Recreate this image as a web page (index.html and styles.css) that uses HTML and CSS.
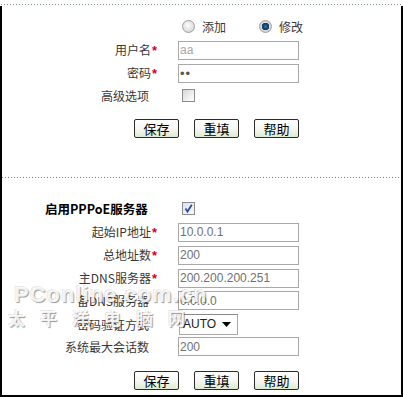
FILE: index.html
```html
<!DOCTYPE html>
<html lang="zh-CN">

<head>
    <meta charset="UTF-8">
    <meta name="viewport" content="width=device-width, initial-scale=1.0">
    <title>PPPoE服务器</title>
    <link rel="stylesheet" href="styles.css">
</head>

<body>
    <div class="page">
        <div class="dots dots-top"></div>
        <div class="frame">
            <!-- 用户设置 -->
            <div class="section section-user">
                <div class="row">
                    <span class="label"></span>
                    <div class="field radios">
                        <span class="radio"></span><span class="radio-text">添加</span>
                        <span class="radio checked"></span><span class="radio-text">修改</span>
                    </div>
                </div>
                <div class="row">
                    <span class="label">用户名<b class="req">*</b></span>
                    <div class="field"><input class="text dim" type="text" value="aa"></div>
                </div>
                <div class="row">
                    <span class="label">密码<b class="req">*</b></span>
                    <div class="field"><input class="text pass" type="password" value="aa"></div>
                </div>
                <div class="row">
                    <span class="label label-up">高级选项</span>
                    <div class="field"><span class="check"></span></div>
                </div>
                <div class="buttons">
                    <button class="btn">保存</button>
                    <button class="btn">重填</button>
                    <button class="btn">帮助</button>
                </div>
            </div>

            <div class="dots dots-mid"></div>

            <!-- PPPoE服务器 -->
            <div class="section section-pppoe">
                <div class="row row-title">
                    <span class="label title">启用PPPoE服务器</span>
                    <div class="field">
                        <span class="check checked">
                            <svg width="11" height="11" viewBox="0 0 11 11">
                                <path d="M2.5 5.5 L4.5 8.5 L8.8 1.8" fill="none" stroke="#2c4fa3" stroke-width="1.8" />
                            </svg>
                        </span>
                    </div>
                </div>
                <div class="row">
                    <span class="label">起始IP地址<b class="req">*</b></span>
                    <div class="field"><input class="text" type="text" value="10.0.0.1"></div>
                </div>
                <div class="row">
                    <span class="label">总地址数<b class="req">*</b></span>
                    <div class="field"><input class="text" type="text" value="200"></div>
                </div>
                <div class="row">
                    <span class="label">主DNS服务器<b class="req">*</b></span>
                    <div class="field"><input class="text" type="text" value="200.200.200.251"></div>
                </div>
                <div class="row">
                    <span class="label label-pad">备DNS服务器</span>
                    <div class="field"><input class="text" type="text" value="0.0.0.0"></div>
                </div>
                <div class="row">
                    <span class="label label-pad">密码验证方式</span>
                    <div class="field">
                        <div class="select">
                            <span>AUTO</span>
                            <svg width="9" height="5" viewBox="0 0 9 5"><path d="M0 0 H9 L4.5 5 Z" fill="#000" /></svg>
                        </div>
                    </div>
                </div>
                <div class="row">
                    <span class="label label-pad">系统最大会话数</span>
                    <div class="field"><input class="text" type="text" value="200"></div>
                </div>
                <div class="buttons">
                    <button class="btn">保存</button>
                    <button class="btn">重填</button>
                    <button class="btn">帮助</button>
                </div>
            </div>
        </div>

        <!-- 水印 -->
        <div class="watermark">
            <div class="wm-en">PConline.com.cn</div>
            <div class="wm-cn">太平洋电脑网</div>
        </div>
    </div>
</body>

</html>
```

FILE: styles.css
```css
* {
    margin: 0;
    padding: 0;
    box-sizing: border-box;
}

body {
    background: #fff;
    font-family: "Noto Sans CJK SC", "Liberation Sans", sans-serif;
    font-size: 12px;
    color: #383838;
}

.page {
    position: relative;
    width: 403px;
    height: 397px;
    overflow: hidden;
}

.dots {
    height: 1px;
    background-image: repeating-linear-gradient(to right, #7f9090 0, #7f9090 1px, transparent 1px, transparent 3px);
}

.dots-top {
    margin: 4px 2px 0 1px;
}

.dots-mid {
    background-image: repeating-linear-gradient(to right, #6f8f6f 0, #6f8f6f 1px, transparent 1px, transparent 3px);
}

.frame {
    margin-top: 1px;
    border-left: 2px solid #000;
    border-right: 2px solid #000;
    border-bottom: 2px solid #000;
}

.section-user {
    padding-top: 11px;
}

.section-pppoe {
    padding-top: 20px;
    padding-bottom: 5px;
}

.row {
    display: grid;
    grid-template-columns: 155px 1fr;
    column-gap: 21px;
    align-items: center;
    height: 19px;
    margin-bottom: 4px;
    line-height: 19px;
}

.row-title {
    height: 20px;
}

.label {
    text-align: right;
    white-space: nowrap;
}

.label-pad {
    padding-right: 8px;
}

.label-up {
    padding-right: 8px;
    line-height: 15px;
}

.title {
    text-align: left;
    padding-left: 43px;
    font-weight: bold;
    color: #000;
    font-size: 12.5px;
}

.req {
    color: #d4001a;
    font-family: "Liberation Sans", sans-serif;
    font-size: 13px;
    margin-left: 1px;
}

.field {
    display: flex;
    align-items: center;
}

.radios .radio {
    margin-left: 4px;
}

.radios .radio.checked {
    margin-left: 33px;
}

.radio {
    display: inline-block;
    width: 13px;
    height: 13px;
    border-radius: 50%;
    border: 1px solid #a0a0a0;
    background: radial-gradient(circle at 45% 40%, #fdfdfd 0, #e2e2e2 55%, #c8c8c8 100%);
}

.radio.checked {
    background: radial-gradient(circle at 50% 50%, #3d7fae 0, #1b4a74 2px, #123a5c 3.5px, #dcdcdc 4px, #c4c4c4 100%);
}

.radio-text {
    margin-left: 7px;
    color: #383838;
    font-size: 12px;
}

.text {
    width: 121px;
    height: 19px;
    border: 1px solid #a8a8a8;
    padding: 0 1px;
    font-family: "Liberation Sans", sans-serif;
    font-size: 12px;
    color: #707070;
    background: #fff;
    outline: none;
}

.text.dim {
    color: #a8a8a8;
}

.text.pass {
    font-size: 13px;
    letter-spacing: 1px;
    color: #555;
}

.check {
    display: inline-flex;
    align-items: center;
    justify-content: center;
    width: 13px;
    height: 13px;
    margin-left: 4px;
    border: 1px solid #8c8c8c;
    background: linear-gradient(135deg, #d6d6d6 0%, #f4f4f4 70%, #fff 100%);
}

.check.checked {
    background: linear-gradient(135deg, #dfe3ea 0%, #f6f7f9 100%);
}

.select {
    display: flex;
    align-items: center;
    justify-content: space-between;
    width: 59px;
    height: 21px;
    margin-left: 1px;
    padding: 0 6px 0 3px;
    border: 1px solid #a8a8a8;
    border-top-color: #888;
    font-family: "Liberation Sans", sans-serif;
    font-size: 12px;
    color: #222;
    background: #fff;
}

.buttons {
    display: flex;
    gap: 15px;
    padding-left: 132px;
    margin-top: 14px;
}

.section-user .buttons {
    margin-bottom: 39px;
}

.section-pppoe .buttons {
    margin-top: 15px;
}

.section-user .row:nth-child(4) {
    margin-bottom: 0;
}

.section-pppoe .row:nth-child(7) {
    margin-bottom: 0;
}

.btn {
    width: 45px;
    height: 19px;
    border: 1px solid #2b2b2b;
    border-radius: 2px;
    background: linear-gradient(to bottom, #ffffff 0%, #f6f6f2 55%, #dcebcf 100%);
    font-family: "Noto Sans CJK SC", sans-serif;
    font-size: 13px;
    line-height: 17px;
    color: #000;
}

.watermark {
    position: absolute;
    left: 14px;
    top: 283px;
    pointer-events: none;
    color: rgba(255, 255, 255, 0.9);
    text-shadow: 1px 1px 1px rgba(0, 0, 0, 0.4), -1px -1px 0 rgba(0, 0, 0, 0.1);
}

.wm-en {
    font-family: "Liberation Sans", sans-serif;
    font-weight: bold;
    font-size: 22px;
    line-height: 24px;
    letter-spacing: 1px;
}

.wm-cn {
    margin-top: 1px;
    font-family: "Noto Sans CJK SC", sans-serif;
    font-weight: bold;
    font-size: 17px;
    line-height: 20px;
    letter-spacing: 15px;
    margin-left: -6px;
}
```
